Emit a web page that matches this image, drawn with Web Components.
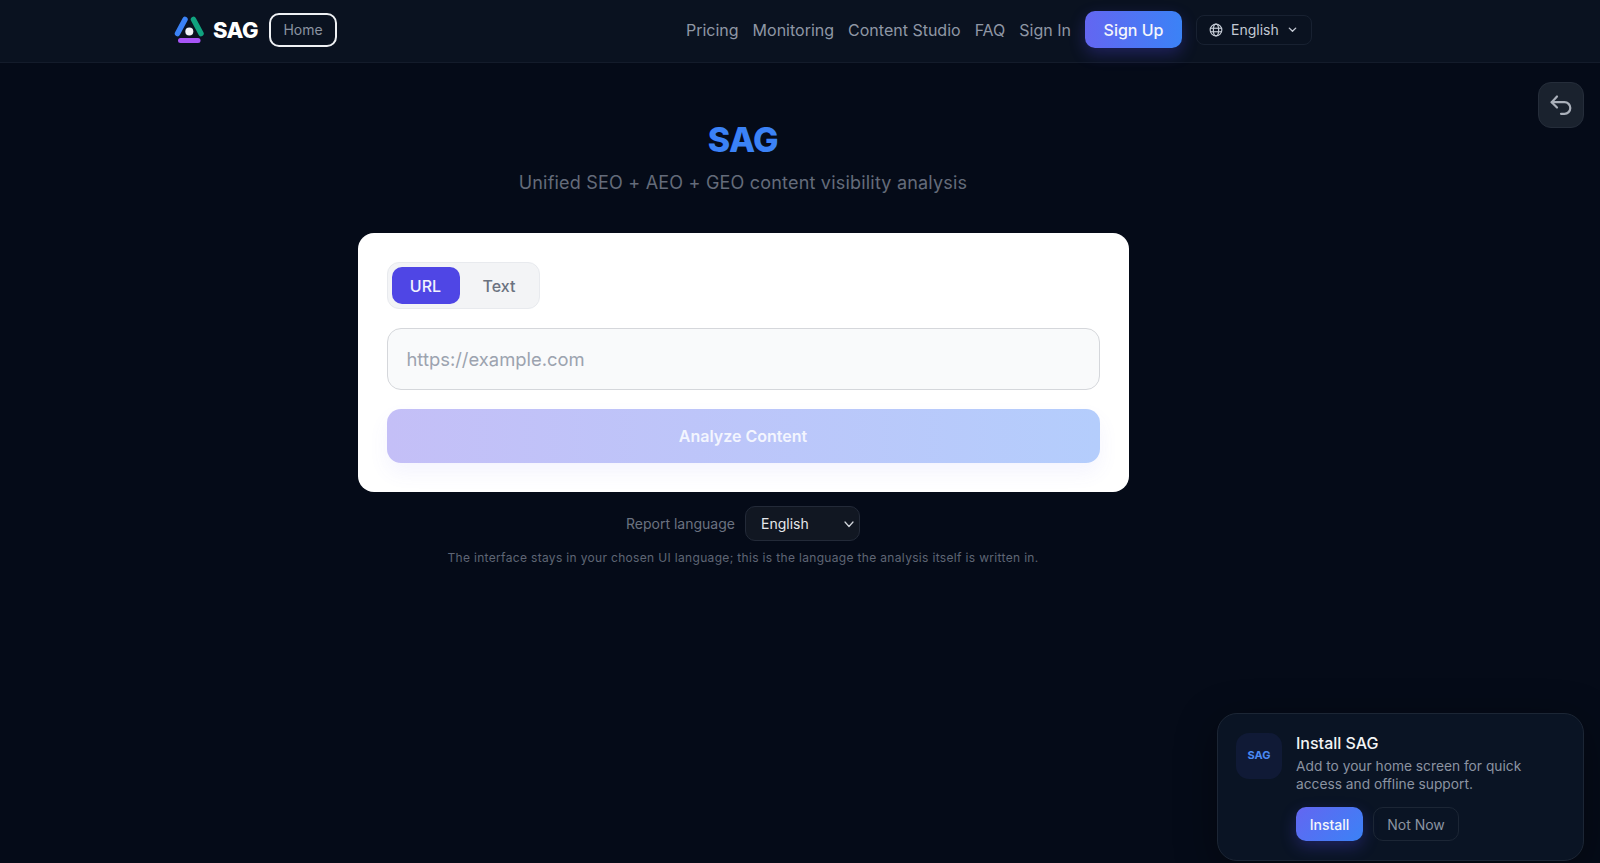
<!DOCTYPE html>
<html lang="en">
<head>
<meta charset="utf-8">
<title>SAG</title>
<style>
    html, body {
        margin: 0;
        height: 100%;
        overflow: hidden;
        background: #050b18;
        font-family: Inter, "Liberation Sans", sans-serif;
    }
</style>
</head>
<body>
<app-shell>
    <site-header></site-header>
    <analyzer-panel></analyzer-panel>
    <back-button></back-button>
    <install-prompt></install-prompt>
</app-shell>

<script>
class AppShell extends HTMLElement {
    constructor() {
        super();
        this._shadowDOM = this.attachShadow({ mode: "open" });
    }

    connectedCallback() {
        this._shadowDOM.innerHTML = `
            <style>
                :host {
                    display: flex;
                    flex-direction: column;
                    height: 863px;
                    position: relative;
                    overflow: hidden;
                    background: #050b18;
                }
            </style>
            <slot></slot>
        `;
    }
}

class SiteHeader extends HTMLElement {
    constructor() {
        super();
        this._shadowDOM = this.attachShadow({ mode: "open" });
    }

    connectedCallback() {
        this._shadowDOM.innerHTML = `
            <style>
                :host {
                    display: flex;
                    align-items: center;
                    justify-content: space-between;
                    height: 59px;
                    padding: 0 288px 3px 174px;
                    background: #0a1220;
                    border-bottom: 1px solid #141c2b;
                    flex: none;
                }
                .left, nav { display: flex; align-items: center; }
                .brand {
                    display: flex;
                    align-items: center;
                    gap: 9px;
                    font-size: 22px;
                    font-weight: 800;
                    color: #fff;
                    letter-spacing: -0.5px;
                }
                .home {
                    margin-left: 11px;
                    width: 68px;
                    height: 34px;
                    box-sizing: border-box;
                    display: flex;
                    align-items: center;
                    justify-content: center;
                    border: 2px solid #eef0f3;
                    border-radius: 10px;
                    font-size: 14px;
                    color: #8b93a1;
                }
                nav { gap: 14px; font-size: 16px; color: #8f97a5; }
                .signup {
                    width: 97px;
                    height: 37px;
                    display: flex;
                    align-items: center;
                    justify-content: center;
                    border-radius: 10px;
                    background: linear-gradient(90deg, #6366f1, #3b82f6);
                    box-shadow: 0 6px 16px rgba(79, 70, 229, .3);
                    color: #f4f6fb;
                    font-weight: 500;
                    font-size: 16px;
                }
                .lang {
                    width: 116px;
                    height: 30px;
                    box-sizing: border-box;
                    display: flex;
                    align-items: center;
                    gap: 8px;
                    padding-left: 12px;
                    border: 1px solid #182131;
                    border-radius: 8px;
                    font-size: 14px;
                    color: #c3c9d3;
                }
            </style>
            <div class="left">
                <div class="brand">
                    <svg width="30" height="30" viewBox="0 0 30 30" fill="none" stroke-linecap="round">
                        <line x1="3.5" y1="18.5" x2="11" y2="4.5" stroke="#3b82f6" stroke-width="5.5"/>
                        <line x1="19.5" y1="4.5" x2="27" y2="18.5" stroke="#10a37f" stroke-width="5.5"/>
                        <circle cx="15.3" cy="16.5" r="4" fill="#f1f3f6"/>
                        <line x1="6.5" y1="25.5" x2="24" y2="25.5" stroke="#a855f7" stroke-width="5"/>
                    </svg>
                    <span>SAG</span>
                </div>
                <div class="home">Home</div>
            </div>
            <nav>
                <span>Pricing</span>
                <span>Monitoring</span>
                <span>Content Studio</span>
                <span>FAQ</span>
                <span>Sign In</span>
                <div class="signup">Sign Up</div>
                <div class="lang">
                    <svg width="14" height="14" viewBox="0 0 24 24" fill="none" stroke="#c3c9d3" stroke-width="2">
                        <circle cx="12" cy="12" r="10"/>
                        <ellipse cx="12" cy="12" rx="4.5" ry="10"/>
                        <line x1="2" y1="9" x2="22" y2="9"/>
                        <line x1="2" y1="15" x2="22" y2="15"/>
                    </svg>
                    <span>English</span>
                    <svg width="11" height="11" viewBox="0 0 24 24" fill="none" stroke="#c3c9d3" stroke-width="3" stroke-linecap="round" stroke-linejoin="round">
                        <polyline points="5 9 12 16 19 9"/>
                    </svg>
                </div>
            </nav>
        `;
    }
}

class AnalyzerPanel extends HTMLElement {
    constructor() {
        super();
        this._shadowDOM = this.attachShadow({ mode: "open" });
    }

    connectedCallback() {
        this._shadowDOM.innerHTML = `
            <style>
                :host {
                    display: flex;
                    flex-direction: column;
                    align-items: center;
                    padding: 55px 114px 0 0;
                    color: #6b7280;
                }
                h1 {
                    margin: 0;
                    font-size: 34px;
                    line-height: 44px;
                    font-weight: 800;
                    color: #3b82f6;
                    letter-spacing: -0.5px;
                }
                .sub {
                    margin: 7px 0 0;
                    font-size: 18px;
                    line-height: 28px;
                    color: #646b7a;
                    letter-spacing: .2px;
                }
                .card {
                    margin-top: 36px;
                    width: 771px;
                    box-sizing: border-box;
                    padding: 29px;
                    background: #fff;
                    border-radius: 16px;
                    display: flex;
                    flex-direction: column;
                    align-items: stretch;
                }
                .tabs {
                    align-self: flex-start;
                    display: flex;
                    padding: 4px;
                    gap: 4px;
                    border: 1px solid #e8eaee;
                    border-radius: 12px;
                    background: #f3f4f6;
                }
                .tab {
                    height: 37px;
                    width: 68px;
                    display: flex;
                    align-items: center;
                    justify-content: center;
                    border-radius: 10px;
                    font-size: 16px;
                    font-weight: 500;
                    color: #6b7280;
                }
                .tab.on { background: #4f46e5; color: #f2f2fd; }
                .tab + .tab { width: 71px; }
                input {
                    margin-top: 19px;
                    height: 62px;
                    box-sizing: border-box;
                    padding: 0 19px;
                    border: 1px solid #d5d7db;
                    border-radius: 14px;
                    background: #f9fafb;
                    font: 18.4px Inter, "Liberation Sans", sans-serif;
                    outline: none;
                }
                input::placeholder { color: #9ca3af; opacity: 1; }
                .go {
                    margin-top: 19px;
                    height: 54px;
                    display: flex;
                    align-items: center;
                    justify-content: center;
                    border-radius: 14px;
                    background: linear-gradient(90deg, #c4bff7, #b4cdfc);
                    box-shadow: 0 10px 20px rgba(99, 102, 241, .07);
                    color: #f3f5fe;
                    font-size: 16px;
                    font-weight: 600;
                }
                .report {
                    margin-top: 14px;
                    display: flex;
                    align-items: center;
                    gap: 10px;
                    font-size: 14px;
                }
                .select {
                    position: relative;
                    display: flex;
                }
                select {
                    appearance: none;
                    width: 115px;
                    height: 35px;
                    box-sizing: border-box;
                    padding: 0 15px;
                    border: 1px solid #232a38;
                    border-radius: 10px;
                    background: #111722;
                    color: #e5e7eb;
                    font: 14px Inter, "Liberation Sans", sans-serif;
                }
                .select svg { position: absolute; right: 5px; top: 12px; pointer-events: none; }
                .hint {
                    margin: 9px 0 0;
                    font-size: 12px;
                    line-height: 16px;
                    color: #5f6675;
                    letter-spacing: .33px;
                }
            </style>
            <h1>SAG</h1>
            <p class="sub">Unified SEO + AEO + GEO content visibility analysis</p>
            <div class="card">
                <div class="tabs">
                    <div class="tab on">URL</div>
                    <div class="tab">Text</div>
                </div>
                <input type="text" placeholder="https://example.com">
                <div class="go">Analyze Content</div>
            </div>
            <div class="report">
                <span>Report language</span>
                <div class="select">
                    <select><option>English</option></select>
                    <svg width="12" height="12" viewBox="0 0 24 24" fill="none" stroke="#d1d5db" stroke-width="2.5" stroke-linecap="round" stroke-linejoin="round">
                        <polyline points="4 8 12 17 20 8"/>
                    </svg>
                </div>
            </div>
            <p class="hint">The interface stays in your chosen UI language; this is the language the analysis itself is written in.</p>
        `;
    }
}

class BackButton extends HTMLElement {
    constructor() {
        super();
        this._shadowDOM = this.attachShadow({ mode: "open" });
    }

    connectedCallback() {
        this._shadowDOM.innerHTML = `
            <style>
                :host {
                    position: absolute;
                    top: 82px;
                    right: 16px;
                    width: 46px;
                    height: 46px;
                    box-sizing: border-box;
                    display: flex;
                    align-items: center;
                    justify-content: center;
                    background: #1a222e;
                    border: 1px solid #252d3a;
                    border-radius: 13px;
                }
            </style>
            <svg width="24" height="24" viewBox="0 0 24 24" fill="none" stroke="#aab0ba" stroke-width="2.2" stroke-linecap="round" stroke-linejoin="round">
                <path d="M8 3.5 L2.7 9.2 L8 14.5"/>
                <path d="M2.7 9.2 H15.5 a5.8 5.8 0 0 1 0 11.6 H12"/>
            </svg>
        `;
    }
}

class InstallPrompt extends HTMLElement {
    constructor() {
        super();
        this._shadowDOM = this.attachShadow({ mode: "open" });
    }

    connectedCallback() {
        this._shadowDOM.innerHTML = `
            <style>
                :host {
                    position: absolute;
                    right: 16px;
                    bottom: 2px;
                    width: 367px;
                    height: 148px;
                    box-sizing: border-box;
                    display: flex;
                    gap: 14px;
                    padding: 19px 18px;
                    background: #0a1424;
                    border: 1px solid #1c2635;
                    border-radius: 20px;
                    box-shadow: 0 10px 40px rgba(0, 0, 0, .4);
                }
                .icon {
                    width: 46px;
                    height: 46px;
                    box-sizing: border-box;
                    padding-bottom: 2px;
                    flex: none;
                    display: flex;
                    align-items: center;
                    justify-content: center;
                    border-radius: 13px;
                    background: #101a36;
                    color: #4a8af4;
                    font-size: 11px;
                    font-weight: 700;
                }
                .title { font-size: 16px; line-height: 20px; font-weight: 500; color: #f3f4f6; }
                .desc { margin-top: 4px; font-size: 13.75px; line-height: 18px; color: #8b93a1; }
                .actions { display: flex; gap: 10px; margin-top: 14px; }
                .btn {
                    height: 34px;
                    box-sizing: border-box;
                    display: flex;
                    align-items: center;
                    justify-content: center;
                    border-radius: 10px;
                    font-size: 14px;
                }
                .install {
                    width: 67px;
                    font-weight: 500;
                    color: #f4f6fb;
                    background: linear-gradient(135deg, #6366f1, #3b82f6);
                    box-shadow: 0 6px 16px rgba(79, 70, 229, .3);
                }
                .later { width: 86px; border: 1px solid #1c2635; color: #8b93a1; }
            </style>
            <div class="icon">SAG</div>
            <div>
                <div class="title">Install SAG</div>
                <div class="desc">Add to your home screen for quick<br>access and offline support.</div>
                <div class="actions">
                    <div class="btn install">Install</div>
                    <div class="btn later">Not Now</div>
                </div>
            </div>
        `;
    }
}

customElements.define("app-shell", AppShell);
customElements.define("site-header", SiteHeader);
customElements.define("analyzer-panel", AnalyzerPanel);
customElements.define("back-button", BackButton);
customElements.define("install-prompt", InstallPrompt);
</script>
</body>
</html>
